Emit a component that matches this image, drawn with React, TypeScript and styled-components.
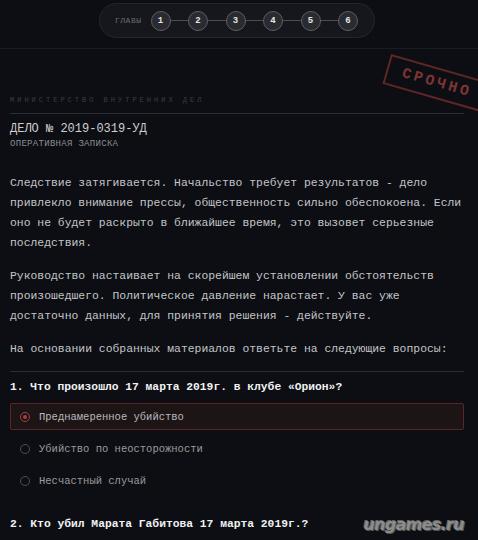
import React from 'react';
import styled, { createGlobalStyle } from 'styled-components';

const GlobalStyle = createGlobalStyle`
  body {
    margin: 0;
    background-color: #0c0e13;
    font-family: "Courier New", "Liberation Mono", monospace;
    overflow: hidden;
  }
`;

const Page = styled.div`
  width: 478px;
  height: 540px;
  position: relative;
  overflow: hidden;
  background-color: #0c0e13;
`;

const Header = styled.div`
  height: 49px;
  border-bottom: 1px solid #1a1c22;
  display: flex;
  justify-content: center;
  padding: 3px 4px 0 0;
  box-sizing: border-box;
`;

const ChapterBar = styled.div`
  height: 35px;
  padding: 0 16px 0 15px;
  border-radius: 18px;
  background-color: #16171c;
  border: 1px solid #24262c;
  display: flex;
  align-items: center;
  gap: 9px;
  box-sizing: border-box;
`;

const ChapterLabel = styled.span`
  font-size: 8px;
  color: #6a6c72;
  letter-spacing: 0.5px;
`;

const Steps = styled.div`
  display: flex;
  align-items: center;
`;

const Step = styled.div`
  width: 20px;
  height: 20px;
  border-radius: 50%;
  border: 1.5px solid #5c5e64;
  background-color: #2a2b31;
  color: #e6e6e6;
  font-size: 9px;
  font-weight: bold;
  display: flex;
  align-items: center;
  justify-content: center;
  box-sizing: border-box;
`;

const Connector = styled.div`
  width: 17.5px;
  height: 1.5px;
  background-color: #4a4c52;
`;

const Content = styled.div`
  padding: 46px 14px 0 10px;
  position: relative;
`;

const Stamp = styled.div`
  position: absolute;
  top: 5px;
  left: 391px;
  padding: 5px 14px;
  border: 2px solid #5e2626;
  color: #7e3434;
  font-size: 15px;
  font-weight: bold;
  letter-spacing: 3px;
  transform: rotate(16deg);
  transform-origin: left top;
  white-space: nowrap;
`;

const Ministry = styled.div`
  font-size: 7px;
  letter-spacing: 3px;
  color: #3a3d45;
  line-height: 10px;
`;

const Divider = styled.div<{ $gap: number }>`
  height: 1px;
  background-color: #2a2d35;
  margin: ${(p) => p.$gap}px 0;
`;

const CaseNumber = styled.div`
  font-size: 12px;
  color: #cfcfd2;
  line-height: 14px;
`;

const CaseSub = styled.div`
  font-size: 9px;
  color: #8b8c90;
  letter-spacing: 0.3px;
  margin-top: 3px;
`;

const Paragraph = styled.p`
  font-size: 11.4px;
  line-height: 20px;
  color: #c4c5c8;
  margin: 0 0 13px;

  &:last-child {
    margin-bottom: 12px;
  }
`;

const Intro = styled.div`
  margin-top: 24px;
`;

const Question = styled.div<{ $first?: boolean }>`
  font-size: 11.3px;
  font-weight: bold;
  color: #f2f2f2;
  line-height: 16px;
  margin: ${(p) => (p.$first ? '7px 0 8px' : '22px 0 8px')};
`;

const Options = styled.div`
  display: flex;
  flex-direction: column;
  gap: 5px;
`;

const Option = styled.div<{ $selected?: boolean }>`
  height: 27px;
  display: flex;
  align-items: center;
  gap: 9px;
  padding-left: 9px;
  border-radius: 2px;
  border: 1px solid ${(p) => (p.$selected ? '#5e2426' : 'transparent')};
  background-color: ${(p) => (p.$selected ? '#1d1416' : 'transparent')};
  font-size: 10.5px;
  color: ${(p) => (p.$selected ? '#b9b9bc' : '#9a9b9f')};
  box-sizing: border-box;
`;

const Radio = styled.span<{ $selected?: boolean }>`
  width: 10px;
  height: 10px;
  border-radius: 50%;
  border: 1.5px solid ${(p) => (p.$selected ? '#a8403f' : '#4c4e55')};
  box-sizing: border-box;
  display: flex;
  align-items: center;
  justify-content: center;
  &::after {
    content: '';
    width: 4px;
    height: 4px;
    border-radius: 50%;
    background-color: ${(p) => (p.$selected ? '#a8403f' : 'transparent')};
  }
`;

const Watermark = styled.div`
  position: absolute;
  right: 14px;
  bottom: 6px;
  font-family: "DejaVu Sans", sans-serif;
  font-size: 16px;
  font-weight: 900;
  font-style: italic;
  color: #8c8c8c;
  letter-spacing: -0.7px;
  text-shadow: 1px 1px 0 #555, -1px -1px 0 #666;
`;

const chapters = [1, 2, 3, 4, 5, 6];

const answers = [
  { text: 'Преднамеренное убийство', selected: true },
  { text: 'Убийство по неосторожности', selected: false },
  { text: 'Несчастный случай', selected: false },
];

function App() {
  return (
    <Page>
      <GlobalStyle />
      <Header>
        <ChapterBar>
          <ChapterLabel>ГЛАВЫ</ChapterLabel>
          <Steps>
            {chapters.map((n, i) => (
              <React.Fragment key={n}>
                {i > 0 && <Connector />}
                <Step>{n}</Step>
              </React.Fragment>
            ))}
          </Steps>
        </ChapterBar>
      </Header>
      <Content>
        <Stamp>СРОЧНО</Stamp>
        <Ministry>МИНИСТЕРСТВО ВНУТРЕННИХ ДЕЛ</Ministry>
        <Divider $gap={8} />
        <CaseNumber>ДЕЛО № 2019-0319-УД</CaseNumber>
        <CaseSub>ОПЕРАТИВНАЯ ЗАПИСКА</CaseSub>
        <Intro>
          <Paragraph>
            Следствие затягивается. Начальство требует результатов - дело привлекло внимание прессы, общественность сильно обеспокоена. Если оно не будет раскрыто в ближайшее время, это вызовет серьезные последствия.
          </Paragraph>
          <Paragraph>
            Руководство настаивает на скорейшем установлении обстоятельств произошедшего. Политическое давление нарастает. У вас уже достаточно данных, для принятия решения - действуйте.
          </Paragraph>
          <Paragraph>На основании собранных материалов ответьте на следующие вопросы:</Paragraph>
        </Intro>
        <Divider $gap={0} />
        <Question $first>1. Что произошло 17 марта 2019г. в клубе «Орион»?</Question>
        <Options>
          {answers.map((a) => (
            <Option key={a.text} $selected={a.selected}>
              <Radio $selected={a.selected} />
              {a.text}
            </Option>
          ))}
        </Options>
        <Question>2. Кто убил Марата Габитова 17 марта 2019г.?</Question>
      </Content>
      <Watermark>ungames.ru</Watermark>
    </Page>
  );
}

export default App;
